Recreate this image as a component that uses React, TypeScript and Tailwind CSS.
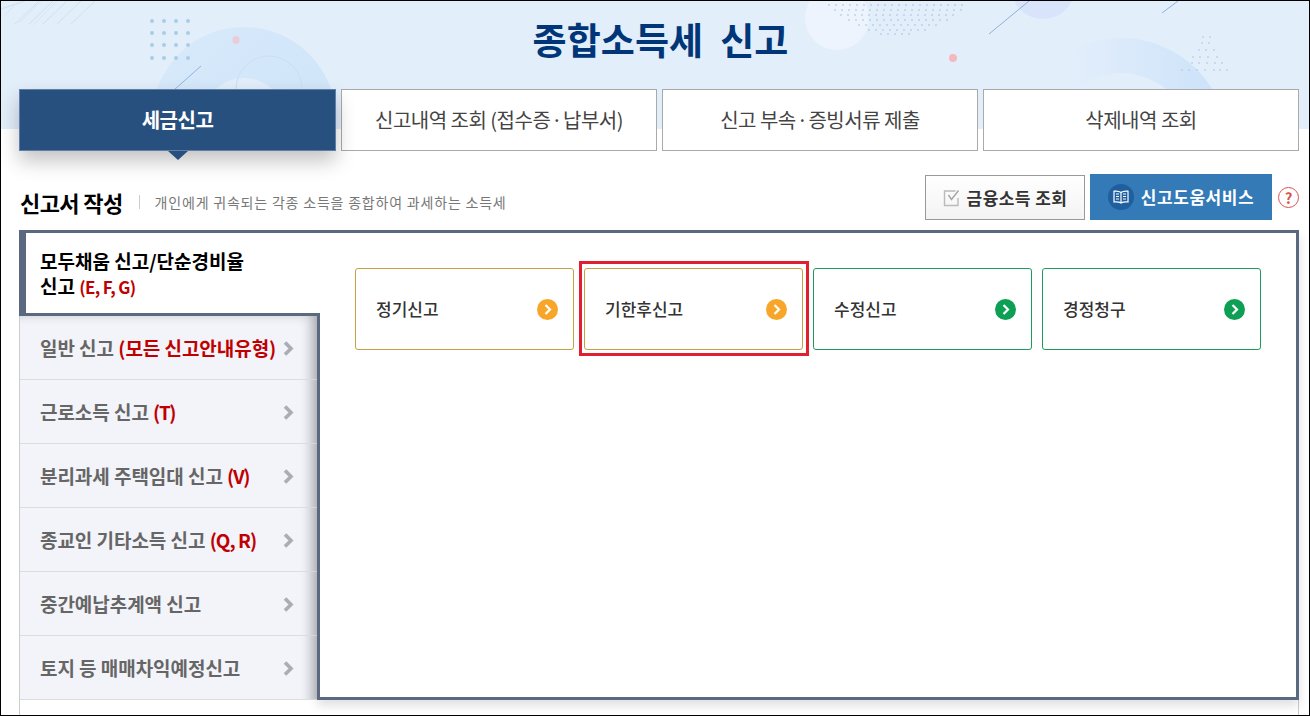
const FONT = "font-['Noto_Sans_CJK_KR','Noto_Sans',sans-serif]";

const Banner = () => {
  const leftDots = [151, 163, 175, 187];
  const leftRows = [20, 32, 44, 57];
  const fanRows = [
    { y: 4, from: 828, to: 966 },
    { y: 9, from: 834, to: 960 },
    { y: 14, from: 840, to: 954 },
    { y: 19, from: 848, to: 946 },
    { y: 24, from: 858, to: 938 },
    { y: 29, from: 868, to: 926 },
    { y: 33, from: 880, to: 912 },
  ];
  const triRows = [
    { y: 36, xs: [1202, 1209] },
    { y: 42, xs: [1201, 1208] },
    { y: 49, xs: [1198, 1205, 1213] },
    { y: 56, xs: [1192, 1199, 1207, 1216] },
    { y: 62, xs: [1191, 1198, 1206, 1214, 1221] },
    { y: 69, xs: [1181, 1188, 1196, 1204, 1213, 1219, 1226] },
  ];
  return (
    <svg className="absolute inset-0" width="1308" height="128" viewBox="0 0 1308 128">
      <defs>
        <linearGradient id="ring-left" x1="0" y1="0" x2="1" y2="1">
          <stop offset="0" stopColor="#d8eafb" />
          <stop offset="1" stopColor="#cde3f9" />
        </linearGradient>
        <linearGradient id="ring-right" x1="0" y1="0" x2="1" y2="0">
          <stop offset="0.25" stopColor="#e3eefb" />
          <stop offset="1" stopColor="#cbe2f9" />
        </linearGradient>
      </defs>
      {[0, 14, 28, 42, 56, 70].map((x) => (
        <path key={x} d={`M${x} ${x === 0 ? 8 : 23}L${x + 24} 0`} stroke="#cfdff0" strokeWidth="1" />
      ))}
      <path d="M4 14L18 0M18 22L40 0M32 24L56 0" stroke="#d6e4f3" strokeWidth="1" />
      <path fillRule="evenodd" fill="url(#ring-left)" d="M151 118a92 92 0 1 1 184 0a92 92 0 1 1-184 0zM202 118a41 41 0 1 0 82 0a41 41 0 1 0-82 0z" />
      <circle cx="268" cy="88" r="33" fill="none" stroke="#cbdef3" />
      <path d="M173 89L200 65" stroke="#8fb4de" />
      <ellipse cx="235" cy="39" rx="3.5" ry="4" fill="#eccbd8" />
      {leftRows.map((y) =>
        leftDots.map((x) => <circle key={`${x}-${y}`} cx={x} cy={y} r="2" fill="#a9cde6" />)
      )}
      <circle cx="836" cy="17" r="32" fill="#edf4fd" />
      {fanRows.map((row) =>
        Array.from({ length: Math.floor((row.to - row.from) / 7) + 1 }, (_, i) => (
          <circle key={`${row.y}-${i}`} cx={row.from + i * 7} cy={row.y} r="0.8" fill="#a5bcdc" />
        ))
      )}
      <circle cx="1042" cy="-14" r="32" fill="#d9e3fa" />
      <path d="M988 33L1028 0M1161 12L1177 0" stroke="#8fb0dc" />
      <circle cx="952" cy="57" r="4" fill="#f4b9bc" />
      <path fillRule="evenodd" fill="url(#ring-right)" d="M1013 144a107 107 0 1 1 214 0a107 107 0 1 1-214 0zM1048 144a72 72 0 1 0 144 0a72 72 0 1 0-144 0z" />
      {triRows.map((row) =>
        row.xs.map((x) => <circle key={`${x}-${row.y}`} cx={x} cy={row.y} r="0.8" fill="#aebfda" />)
      )}
    </svg>
  );
};

const TopTabs = () => {
  const tabs = [
    ["신고내역 조회 (접수증", "납부서)"],
    ["신고 부속", "증빙서류 제출"],
    ["삭제내역 조회"],
  ];
  return (
    <div className="relative -mt-[40px] flex gap-[5px] pl-[18px] pr-[10px]">
      <div className="relative flex h-[62px] w-[317px] items-center justify-center border border-[#5f7fa6] bg-[#27507f] text-[20px] font-bold tracking-[-0.5px] text-white shadow-[0_10px_20px_rgba(0,0,0,0.24)]">
        세금신고
        <span className="absolute left-[148px] top-[61px] h-0 w-0 border-x-[10px] border-t-[9px] border-x-transparent border-t-[#27507f]" />
      </div>
      {tabs.map(([first, second]) => (
        <div
          key={first}
          className="flex h-[62px] w-[316px] items-center justify-center border border-[#aaaaaa] bg-white text-[20px] tracking-[-0.5px] text-[#444444]"
        >
          {first}
          {second && <span className="mx-[1px]">·</span>}
          {second}
        </div>
      ))}
    </div>
  );
};

const CheckIcon = () => (
  <svg width="18" height="18" viewBox="0 0 18 18" fill="none">
    <path d="M15 9V16.5H1.5V2H12.5" stroke="#bbbbbb" strokeWidth="1.4" />
    <path d="M5.5 6L8.5 10.5L15.5 1.5" stroke="#a5a5a5" strokeWidth="1.4" />
  </svg>
);

const BookIcon = () => (
  <span className="flex h-[26px] w-[26px] items-center justify-center rounded-full bg-[#1f5f9f]">
    <svg width="16" height="14" viewBox="0 0 16 14" fill="none" stroke="#ffffff" strokeWidth="1.2">
      <path d="M8 2.5C6.5 1.2 4 1 1 1.2V12C4 11.8 6.5 12 8 13C9.5 12 12 11.8 15 12V1.2C12 1 9.5 1.2 8 2.5V13" />
      <path d="M3 4H6M3 6.5H6M3 9H6M10 4H13M10 6.5H13M10 9H13" />
    </svg>
  </span>
);

const TitleRow = () => (
  <div className="mt-[23px] flex h-[46px] items-center justify-between pl-[19px] pr-[10px]">
    <div className="flex items-center pt-[10px]">
      <h2 className="text-[22px] font-bold leading-[30px] tracking-[-0.6px] text-black">신고서 작성</h2>
      <span className="ml-[16px] h-[14px] w-px bg-[#cccccc]" />
      <span className="ml-[15px] text-[14px] tracking-[0.8px] text-[#777777]">
        개인에게 귀속되는 각종 소득을 종합하여 과세하는 소득세
      </span>
    </div>
    <div className="flex items-center">
      <button className="mt-px flex h-[45px] w-[160px] items-center justify-center gap-[6px] border border-[#999999] bg-linear-to-b from-white to-[#f3f3f3] text-[17px] font-bold tracking-[0.45px] text-[#333333]">
        <CheckIcon />
        금융소득 조회
      </button>
      <button className="ml-[5px] flex h-[46px] w-[182px] items-center justify-center gap-[7px] bg-[#337ab7] text-[17px] font-bold tracking-[0.55px] text-white">
        <BookIcon />
        신고도움서비스
      </button>
      <span className="ml-[6px] flex h-[21px] w-[21px] items-center justify-center rounded-full border-[1.5px] border-[#d9534f] text-[15px] font-bold leading-none text-[#d9534f]">
        ?
      </span>
    </div>
  </div>
);

const Chevron = () => (
  <svg width="11" height="15" viewBox="0 0 11 15" fill="none">
    <path d="M2 1.5L8 7.5L2 13.5" stroke="#a9adb6" strokeWidth="3.6" />
  </svg>
);

const menuItems = [
  { label: "일반 신고", code: "(모든 신고안내유형)", codeClass: "text-[#c00000]" },
  { label: "근로소득 신고", code: "(T)", codeClass: "text-[#c00000] tracking-[-1.4px]" },
  { label: "분리과세 주택임대 신고", code: "(V)", codeClass: "text-[#c00000] tracking-[-1.4px]" },
  { label: "종교인 기타소득 신고", code: "(Q, R)", codeClass: "text-[#c00000] tracking-[-1px]" },
  { label: "중간예납추계액 신고", code: "", codeClass: "" },
  { label: "토지 등 매매차익예정신고", code: "", codeClass: "" },
];

const SideMenu = () => (
  <div className="w-[297px]">
    <div className="relative z-10 -ml-px h-[86px] w-[301px] border-y-[3px] border-l-[7px] border-[#5a6880] bg-white pl-[14px] pt-[15px] text-[19px] font-bold leading-[25px] text-black">
      모두채움 신고/단순경비율
      <br />
      신고 <span className="text-[17px] tracking-[-0.7px] text-[#c00000]">(E, F, G)</span>
    </div>
    <ul className="bg-[#f3f4fa] shadow-[inset_-16px_8px_12px_-10px_rgba(0,0,0,0.24)]">
      {menuItems.map((item) => (
        <li
          key={item.label}
          className="flex h-[64px] items-center justify-between border-b border-[#dddddd] pl-[20px] pr-[23px] pt-px text-[19px] font-bold tracking-[-0.05px] text-[#666666]"
        >
          <span>
            {item.label}{" "}
            {item.code && <span className={item.codeClass}>{item.code}</span>}
          </span>
          <Chevron />
        </li>
      ))}
    </ul>
  </div>
);

const ArrowDot = ({ color }: { color: string }) => (
  <span className={`flex h-[21px] w-[21px] items-center justify-center rounded-full ${color}`}>
    <svg width="8" height="11" viewBox="0 0 8 11" fill="none">
      <path d="M1.5 1L6 5.5L1.5 10" stroke="#ffffff" strokeWidth="2.2" />
    </svg>
  </span>
);

const cards = [
  { label: "정기신고", border: "border-[#c5a240]", dot: "bg-[#f8a62a]", marked: false },
  { label: "기한후신고", border: "border-[#c5a240]", dot: "bg-[#f8a62a]", marked: true },
  { label: "수정신고", border: "border-[#1d9a5c]", dot: "bg-[#0d9f54]", marked: false },
  { label: "경정청구", border: "border-[#1d9a5c]", dot: "bg-[#0d9f54]", marked: false },
];

const ReportPanel = () => (
  <div className="-mr-px h-[470px] flex-1 border-[3px] border-[#5a6880] bg-white pl-[35px] pt-[35px] shadow-[0_6px_10px_rgba(0,0,0,0.12)]">
    <div className="flex gap-[10px]">
      {cards.map((card) => (
        <div
          key={card.label}
          className={`relative flex h-[82px] w-[219px] items-center justify-between rounded-[3px] border pl-[20px] pr-[15px] text-[17px] font-medium text-[#333333] ${card.border}`}
        >
          <span className="-mt-px">{card.label}</span>
          <ArrowDot color={card.dot} />
          {card.marked && (
            <span className="absolute -bottom-[7px] -left-[6px] -right-[7px] -top-[8px] border-[3px] border-[#e0202e]" />
          )}
        </div>
      ))}
    </div>
  </div>
);

export default function App() {
  return (
    <div className={`h-[716px] w-[1310px] overflow-hidden border border-black bg-white ${FONT}`}>
      <header className="relative h-[128px] bg-[#e3eefb]">
        <Banner />
        <h1 className="relative pl-[11px] pt-[13px] text-center text-[37px] font-bold leading-[50px] tracking-[0.1px] text-[#003678]">
          종합소득세&nbsp; 신고
        </h1>
      </header>
      <TopTabs />
      <TitleRow />
      <div className="ml-[18px] mr-[10px] mt-[10px] flex h-[490px] border-x border-[#cccccc]">
        <SideMenu />
        <ReportPanel />
      </div>
    </div>
  );
}
